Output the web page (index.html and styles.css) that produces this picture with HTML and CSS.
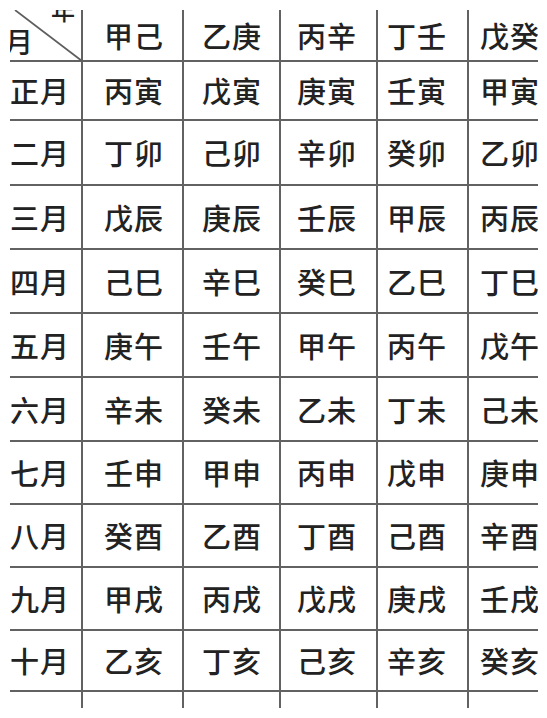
FILE: index.html
```html
<!DOCTYPE html>
<html lang="zh">
<head>
<meta charset="utf-8">
<title>月干支表</title>
<link rel="stylesheet" href="styles.css">
</head>
<body>
<div class="frame">
  <div class="table">
    <div class="cell c0 head">
      <svg class="diag" width="73" height="52" viewBox="0 0 73 52"><line x1="5" y1="0" x2="72" y2="51" stroke="#5e5e5e" stroke-width="1.7"/></svg>
      <span class="year">年</span>
      <span class="month">月</span>
    </div>
    <div class="cell c1">甲己</div><div class="cell c2">乙庚</div><div class="cell c3">丙辛</div><div class="cell c4">丁壬</div><div class="cell c5">戊癸</div>

    <div class="cell c0">正月</div><div class="cell c1">丙寅</div><div class="cell c2">戊寅</div><div class="cell c3">庚寅</div><div class="cell c4">壬寅</div><div class="cell c5">甲寅</div>
    <div class="cell c0">二月</div><div class="cell c1">丁卯</div><div class="cell c2">己卯</div><div class="cell c3">辛卯</div><div class="cell c4">癸卯</div><div class="cell c5">乙卯</div>
    <div class="cell c0">三月</div><div class="cell c1">戊辰</div><div class="cell c2">庚辰</div><div class="cell c3">壬辰</div><div class="cell c4">甲辰</div><div class="cell c5">丙辰</div>
    <div class="cell c0">四月</div><div class="cell c1">己巳</div><div class="cell c2">辛巳</div><div class="cell c3">癸巳</div><div class="cell c4">乙巳</div><div class="cell c5">丁巳</div>
    <div class="cell c0">五月</div><div class="cell c1">庚午</div><div class="cell c2">壬午</div><div class="cell c3">甲午</div><div class="cell c4">丙午</div><div class="cell c5">戊午</div>
    <div class="cell c0">六月</div><div class="cell c1">辛未</div><div class="cell c2">癸未</div><div class="cell c3">乙未</div><div class="cell c4">丁未</div><div class="cell c5">己未</div>
    <div class="cell c0">七月</div><div class="cell c1">壬申</div><div class="cell c2">甲申</div><div class="cell c3">丙申</div><div class="cell c4">戊申</div><div class="cell c5">庚申</div>
    <div class="cell c0">八月</div><div class="cell c1">癸酉</div><div class="cell c2">乙酉</div><div class="cell c3">丁酉</div><div class="cell c4">己酉</div><div class="cell c5">辛酉</div>
    <div class="cell c0">九月</div><div class="cell c1">甲戌</div><div class="cell c2">丙戌</div><div class="cell c3">戊戌</div><div class="cell c4">庚戌</div><div class="cell c5">壬戌</div>
    <div class="cell c0">十月</div><div class="cell c1">乙亥</div><div class="cell c2">丁亥</div><div class="cell c3">己亥</div><div class="cell c4">辛亥</div><div class="cell c5">癸亥</div>
    <div class="cell c0">冬月</div><div class="cell c1">丙子</div><div class="cell c2">戊子</div><div class="cell c3">庚子</div><div class="cell c4">壬子</div><div class="cell c5">甲子</div>
  </div>
</div>
</body>
</html>
```

FILE: styles.css
```css
html, body {
  margin: 0;
  padding: 0;
  background: #ffffff;
}

.frame {
  margin: 10px 0 0 10px;
  width: 528px;
  height: 698px;
  overflow: hidden;
  background: #ffffff;
}

.table {
  display: grid;
  grid-template-columns: 73px 101px 97px 97px 91px 90px;
  grid-template-rows: 52px 59px 65px 64px 64px 64px 64px 63px 63px 63px 61px 63px;
  font-family: "Noto Sans CJK SC", "Noto Sans CJK TC", sans-serif;
  font-size: 29px;
  font-weight: 500;
  line-height: 1;
  letter-spacing: 1px;
  color: #222222;
}

.cell {
  box-sizing: border-box;
  display: flex;
  align-items: center;
  white-space: nowrap;
  border-right: 2px solid #626262;
  border-bottom: 2px solid #626262;
}

.c0 { padding-left: 0; }
.c1 { padding-left: 21px; }
.c2 { padding-left: 18px; }
.c3 { padding-left: 16px; }
.c4 { padding-left: 9px; }
.c5 { padding-left: 11px; border-right: none; }

.head {
  position: relative;
  flex-direction: column;
  align-items: stretch;
  justify-content: space-between;
}

.diag {
  position: absolute;
  left: 0;
  top: 0;
}

.year {
  align-self: flex-end;
  margin: -12px 5px 0 0;
  font-size: 24px;
}

.month {
  align-self: flex-start;
  margin: 0 0 5px -5px;
  font-size: 28px;
}
```
